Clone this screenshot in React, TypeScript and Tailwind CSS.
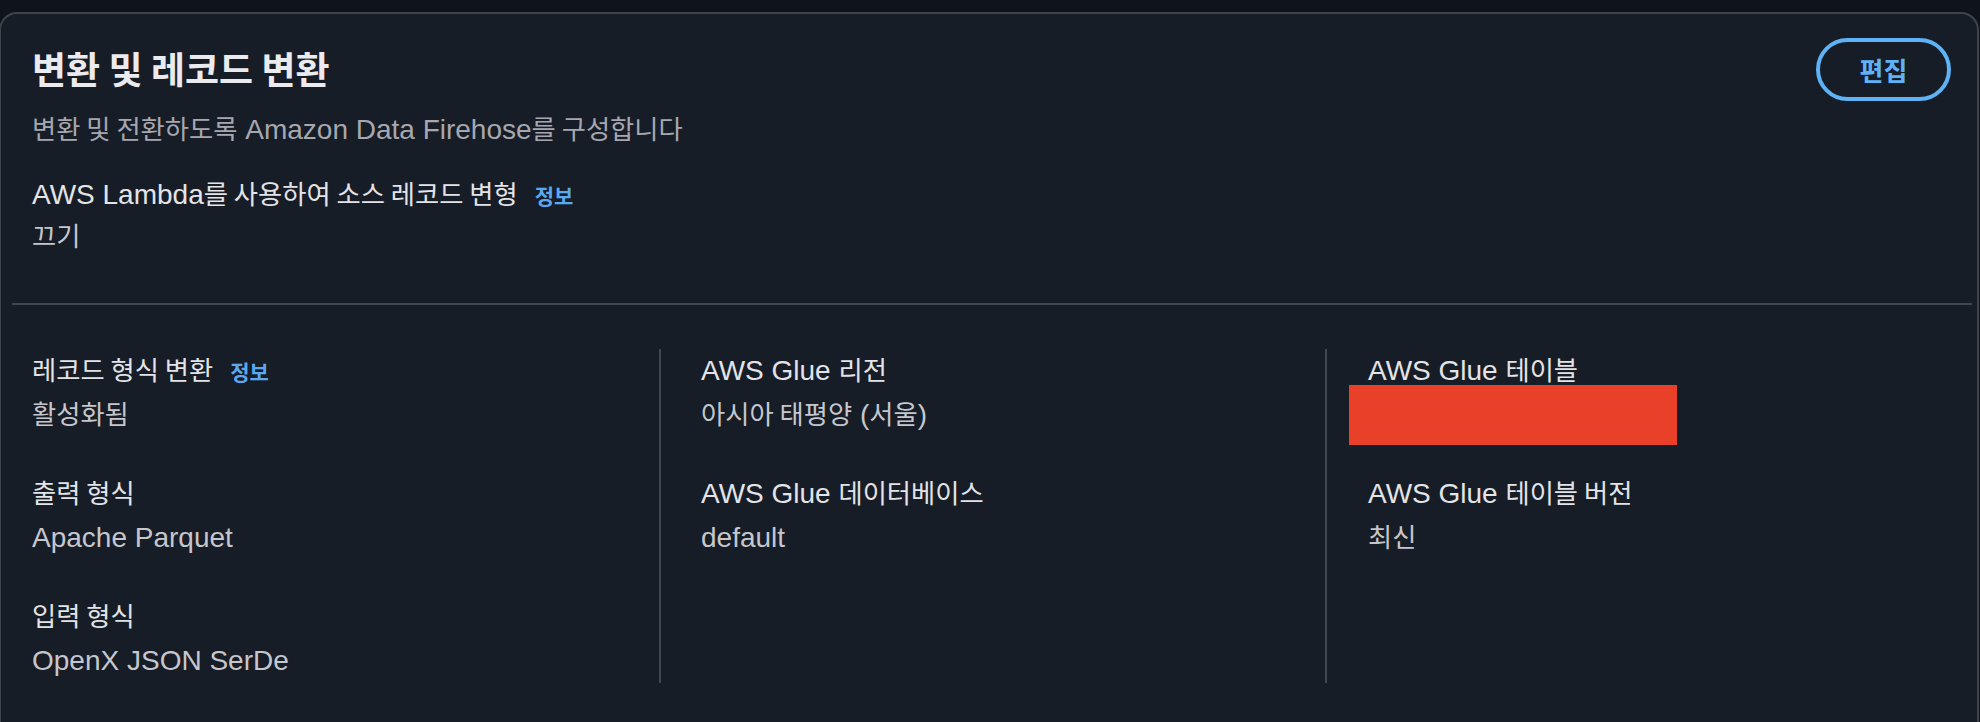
const HANGUL = /([\u3131-\uD79D]+(?:\s+[\u3131-\uD79D]+)*)/

// Latin runs stay in Liberation Sans, Hangul runs get a slightly smaller Noto CJK
function K({ children }: { children: string }) {
  const parts = children.split(HANGUL)
  return (
    <>
      {parts.map((p, i) =>
        /[\u3131-\uD79D]/.test(p) ? (
          <span key={i} className="font-['Noto_Sans_CJK_KR',sans-serif] text-[0.94em] leading-none">
            {p}
          </span>
        ) : (
          p
        ),
      )}
    </>
  )
}

function Info() {
  return (
    <span className="ml-[17px] font-['Noto_Sans_CJK_KR',sans-serif] text-[21px] font-bold leading-none text-[#5aa8f0]">
      정보
    </span>
  )
}

type Item = { label: string; value?: string; info?: boolean; redacted?: boolean }

const columns: Item[][] = [
  [
    { label: '레코드 형식 변환', value: '활성화됨', info: true },
    { label: '출력 형식', value: 'Apache Parquet' },
    { label: '입력 형식', value: 'OpenX JSON SerDe' },
  ],
  [
    { label: 'AWS Glue 리전', value: '아시아 태평양 (서울)' },
    { label: 'AWS Glue 데이터베이스', value: 'default' },
  ],
  [
    { label: 'AWS Glue 테이블', redacted: true },
    { label: 'AWS Glue 테이블 버전', value: '최신' },
  ],
]

function KeyValue({ item }: { item: Item }) {
  return (
    <div>
      <div className="h-[44px] leading-[44px] text-[#e3e3e8]">
        <K>{item.label}</K>
        {item.info && <Info />}
      </div>
      {item.redacted ? (
        <div className="relative h-[44px]">
          <div className="absolute left-[-19px] top-[-8px] h-[60px] w-[328px] bg-[#e9402a]" />
        </div>
      ) : (
        <div className="h-[44px] leading-[44px] text-[#c6c6cd]">
          <K>{item.value ?? ''}</K>
        </div>
      )}
    </div>
  )
}

export default function App() {
  return (
    <div className="h-[722px] w-full overflow-hidden bg-[#0f141a] font-['Liberation_Sans','Noto_Sans_CJK_KR',sans-serif] text-[28px]">
      <div className="ml-[-1px] mr-[1px] mt-[12px] rounded-[18px] border-2 border-[#3f444c] bg-[#161d26] pb-[60px]">
        {/* Header */}
        <div className="flex items-start justify-between pl-[31px] pr-[26px] pt-[24px]">
          <div>
            <h2 className="mt-[6px] h-[48px] font-['Noto_Sans_CJK_KR',sans-serif] text-[37px] font-bold leading-[48px] text-[#ebebef]">
              변환 및 레코드 변환
            </h2>
            <p className="mt-[16px] h-[44px] leading-[44px] text-[#a7a7b0]">
              <K>변환 및 전환하도록 Amazon Data Firehose를 구성합니다</K>
            </p>
            <div className="mt-[21px]">
              <div className="h-[43px] leading-[43px] text-[#e3e3e8]">
                <K>AWS Lambda를 사용하여 소스 레코드 변형</K>
                <Info />
              </div>
              <div className="h-[42px] leading-[42px] text-[#c6c6cd]">
                <K>끄기</K>
              </div>
            </div>
          </div>
          <button className="h-[63px] w-[135px] rounded-full border-4 border-[#5eb2f6] font-['Noto_Sans_CJK_KR',sans-serif] text-[26px] font-bold text-[#5eb2f6]">
            편집
          </button>
        </div>

        {/* Divider */}
        <div className="ml-[11px] mr-[5px] mt-[45px] h-[2px] bg-[#424650]" />

        {/* Columns */}
        <div className="grid grid-cols-[627px_666px_1fr] pl-[31px] pt-[44px]">
          {columns.map((col, ci) => (
            <div
              key={ci}
              className={
                ci === 0
                  ? 'flex flex-col gap-[35px]'
                  : ci === 1
                    ? 'flex flex-col gap-[35px] border-l-2 border-[#424650] pl-[40px]'
                    : 'flex flex-col gap-[35px] border-l-2 border-[#424650] pl-[41px]'
              }
            >
              {col.map((item) => (
                <KeyValue key={item.label} item={item} />
              ))}
            </div>
          ))}
        </div>
      </div>
    </div>
  )
}
